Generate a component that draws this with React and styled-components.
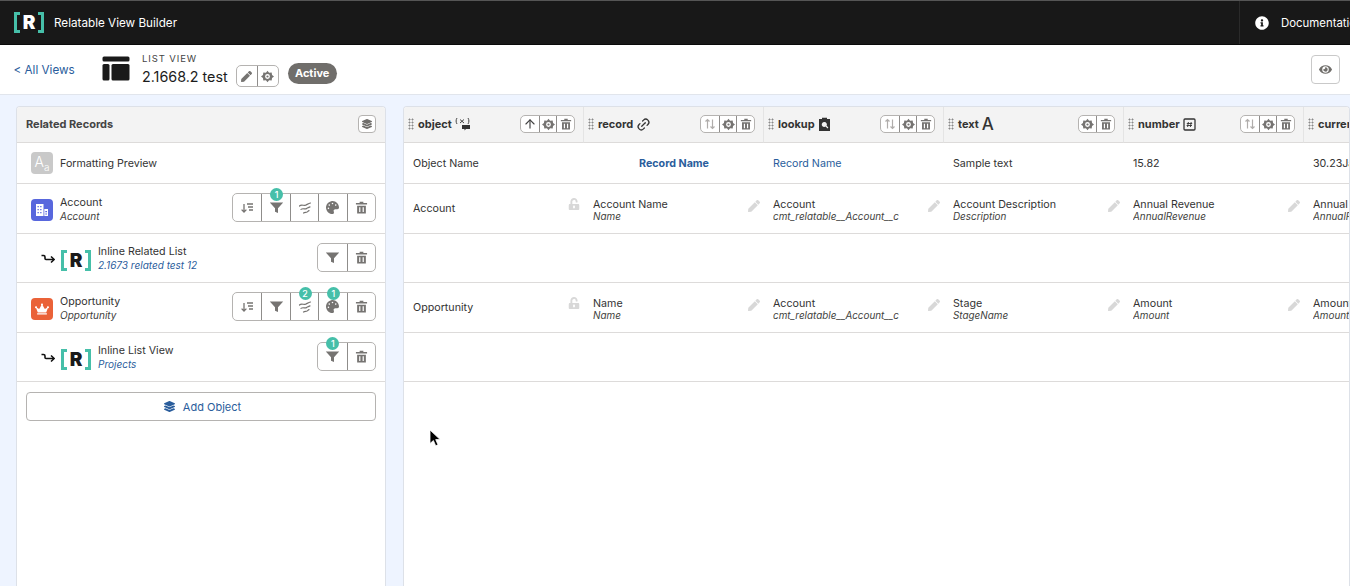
import React from "react";
import styled, { createGlobalStyle } from "styled-components";
import { FaPalette, FaCrown, FaLayerGroup, FaPen, FaInfoCircle, FaUnlockAlt, FaEye } from "react-icons/fa";
import { Link2, ArrowUp } from "lucide-react";

const GlobalStyle = createGlobalStyle`
  html, body { margin: 0; height: 100%; overflow: hidden; background: #eef4ff; }
  body { font-family: Inter, "Liberation Sans", sans-serif; color: #2b2b2b; }
`;

// --- top bar ---

const Page = styled.div`
  position: relative;
  width: 1350px;
  height: 586px;
  display: flex;
  flex-direction: column;
  overflow: hidden;
`;

const TopBar = styled.header`
  height: 45px;
  box-sizing: border-box;
  flex: none;
  display: flex;
  justify-content: space-between;
  background: #181818;
  border-top: 1px solid #555;
  border-bottom: 1px solid #0a0a0a;
  color: #fff;
`;

const Brand = styled.div`
  display: flex;
  align-items: center;
  gap: 10px;
  padding-left: 14px;
  font-size: 11.7px;
`;

const DocLink = styled.div`
  width: 111px;
  box-sizing: border-box;
  display: flex;
  align-items: center;
  gap: 12px;
  padding-left: 15px;
  border-left: 1px solid #2a2a2a;
  font-size: 11.4px;
  white-space: nowrap;
  overflow: hidden;
  flex: none;
  svg {
    flex: none;
  }
`;

const LogoBox = styled.span`
  display: inline-flex;
  align-items: center;
  justify-content: space-between;
  width: 30px;
  height: 21px;
  flex: none;
`;

const Bracket = styled.span`
  width: 6px;
  height: 100%;
  box-sizing: border-box;
  border: 3px solid #46bfa9;
  border-${(p) => (p.$right ? "left" : "right")}: none;
`;

const LogoLetter = styled.span`
  font-size: 19px;
  font-weight: 900;
  line-height: 1;
  color: ${(p) => p.$color};
`;

const Logo = ({ color }) => (
  <LogoBox>
    <Bracket />
    <LogoLetter $color={color}>R</LogoLetter>
    <Bracket $right />
  </LogoBox>
);

// --- view header ---

const SubHeader = styled.div`
  height: 50px;
  flex: none;
  box-sizing: border-box;
  display: flex;
  align-items: center;
  background: #fff;
  border-bottom: 1px solid #e1e5ec;
  padding: 0 10px 0 13.5px;
`;

const BackLink = styled.a`
  width: 88.5px;
  flex: none;
  margin-top: 1px;
  font-size: 11.7px;
  color: #2a5d9c;
`;

const ViewIconSlot = styled.span`
  display: flex;
  margin-top: -3px;
`;

const ViewMeta = styled.div`
  display: flex;
  flex-direction: column;
  margin-left: 12px;
  margin-top: 1px;
`;

const ViewType = styled.span`
  font-size: 9.5px;
  letter-spacing: 0.9px;
  color: #444;
`;

const ViewTitleRow = styled.div`
  display: flex;
  align-items: center;
  margin-top: 1px;
`;

const ViewTitle = styled.span`
  font-size: 14.3px;
  color: #1c1c1c;
  margin-right: 8px;
`;

const ActiveBadge = styled.span`
  margin: 7px 0 0 9px;
  height: 21px;
  width: 49px;
  display: flex;
  align-items: center;
  justify-content: center;
  border-radius: 11px;
  background: #706e6b;
  color: #fff;
  font-size: 11px;
  font-weight: 700;
`;

const EyeButton = styled.button`
  margin-left: auto;
  width: 29px;
  height: 29px;
  padding: 0;
  display: flex;
  align-items: center;
  justify-content: center;
  background: #fff;
  border: 1px solid #c9c9c9;
  border-radius: 4px;
  color: #706e6b;
`;

// --- button groups ---

const Group = styled.div`
  display: flex;
  flex: none;
  height: ${(p) => p.$h}px;
  box-sizing: border-box;
  border: 1px solid #b5b3b1;
  border-radius: 5px;
  background: #fff;
`;

const GroupButton = styled.span`
  position: relative;
  box-sizing: border-box;
  width: ${(p) => p.$w}px;
  display: flex;
  align-items: center;
  justify-content: center;
  color: ${(p) => (p.$muted ? "#b0adab" : "#767472")};
  & + & {
    border-left: 1px solid #8f8d8b;
  }
`;

const CountBadge = styled.span`
  position: absolute;
  top: -6px;
  left: 50%;
  margin-left: -6px;
  width: 13px;
  height: 13px;
  border-radius: 50%;
  background: #46bfa9;
  color: #fff;
  font-size: 9px;
  font-weight: 500;
  line-height: 13px;
  text-align: center;
`;

// --- left panel ---

const Body = styled.main`
  flex: 1;
  display: flex;
  gap: 17px;
  padding: 11px 0 0 16px;
  min-height: 0;
`;

const Panel = styled.section`
  width: ${(p) => p.$w}px;
  flex: none;
  box-sizing: border-box;
  background: #fff;
  border: 1px solid #dde1e8;
  border-bottom: none;
  border-radius: 4px 4px 0 0;
  overflow: hidden;
`;

const PanelHead = styled.div`
  height: 36px;
  box-sizing: border-box;
  display: flex;
  align-items: center;
  justify-content: space-between;
  padding: 0 9px 1px 9px;
  background: #f3f3f3;
  border-bottom: 1px solid #dddbda;
  font-size: 11px;
  font-weight: 700;
  color: #444;
`;

const SmallIconButton = styled.span`
  width: 18px;
  height: 18px;
  box-sizing: border-box;
  display: flex;
  align-items: center;
  justify-content: center;
  background: #fff;
  border: 1px solid #b5b3b1;
  border-radius: 4px;
  color: #706e6b;
`;

const ObjectRow = styled.div`
  height: ${(p) => p.$h}px;
  box-sizing: border-box;
  display: flex;
  align-items: center;
  padding: 0 9px 0 14px;
  gap: 7px;
  border-bottom: 1px solid #dddbda;
`;

const ChildArrow = styled.span`
  width: 14px;
  margin: 2px -1px 0 10px;
  flex: none;
  display: flex;
  color: #111;
`;

const ChildLogo = styled.span`
  display: flex;
  flex: none;
  margin-top: 5px;
`;

const ObjectIcon = styled.span`
  width: 22px;
  height: 22px;
  flex: none;
  display: flex;
  align-items: center;
  justify-content: center;
  margin-top: ${(p) => (p.$drop ? 3 : 0)}px;
  border-radius: 4px;
  background: ${(p) => p.$bg};
  color: #fff;
`;

const PreviewGlyph = styled.span`
  font-size: 14px;
  font-weight: 300;
  line-height: 1;
  margin-top: -3px;
  small {
    font-size: 10px;
    position: relative;
    top: 4px;
  }
`;

const ObjectText = styled.div`
  flex: 1;
  min-width: 0;
  padding-top: 1px;
  font-size: 10.7px;
  line-height: 14px;
`;

const ObjectName = styled.div`
  color: #333;
`;

const ObjectApi = styled.div`
  margin-top: -1px;
  font-size: 10px;
  font-style: italic;
  color: ${(p) => (p.$link ? "#2a5d9c" : "#3e3e3c")};
`;

const RowActions = styled.div`
  flex: none;
  margin-bottom: 2px;
`;

const AddObject = styled.button`
  display: flex;
  align-items: center;
  justify-content: center;
  gap: 8px;
  width: calc(100% - 18px);
  height: 29px;
  margin: 10px 9px;
  padding: 0 0 0 3px;
  background: #fff;
  border: 1px solid #b5b3b1;
  border-radius: 4px;
  font: inherit;
  font-size: 11px;
  color: #2a5d9c;
`;

// --- field table ---

const FieldGrid = styled.div`
  display: grid;
  grid-template-columns: repeat(6, 180px);
  grid-template-rows: 36px 41px 50px 49px 50px 49px;
`;

const ColumnHead = styled.div`
  display: flex;
  align-items: center;
  box-sizing: border-box;
  padding: 0 8px 1px 4px;
  background: #f3f3f3;
  border-bottom: 1px solid #dddbda;
  border-right: 1px solid #e4e4e4;
  font-size: 11px;
  font-weight: 700;
  color: #333;
`;

const Grip = styled.span`
  width: 6px;
  height: 12px;
  margin-right: 4px;
  flex: none;
  background-image: radial-gradient(#8a8a8a 0.9px, transparent 1.1px);
  background-size: 3px 3px;
`;

const ColumnType = styled.span`
  display: flex;
  align-items: center;
  margin-left: 3px;
  margin-right: auto;
  color: #333;
`;

const TextTypeGlyph = styled.span`
  font-size: 17px;
  font-weight: 500;
  line-height: 1;
`;

const LinkTypeIcon = styled(Link2)`
  transform: rotate(-45deg);
`;

const Cell = styled.div`
  display: flex;
  align-items: center;
  justify-content: ${(p) => (p.$center ? "center" : "flex-start")};
  box-sizing: border-box;
  padding: ${(p) => p.$top}px 9px 0;
  background: #fff;
  border-bottom: 1px solid #dddbda;
  font-size: 10.7px;
  font-weight: ${(p) => (p.$bold ? 700 : 400)};
  color: ${(p) => (p.$link ? "#2a5d9c" : "#333")};
  white-space: nowrap;
  overflow: hidden;
`;

const CellText = styled.div`
  flex: 1;
  line-height: 12px;
  overflow: hidden;
`;

const CellApi = styled.div`
  margin-top: -1px;
  font-size: 9.9px;
  font-style: italic;
  color: #3e3e3c;
`;

const CellIcon = styled.span`
  display: flex;
  flex: none;
  margin: -10px -5px 0 0;
  color: #d8d8d8;
`;

const Pointer = styled.svg`
  position: absolute;
  left: 429px;
  top: 429px;
`;

// --- icons ---

const FilterIcon = () => (
  <svg width="15" height="15" viewBox="0 0 15 15" fill="currentColor">
    <path d="M.8 2.500h13.400L9 8.300v4.700l-3-1.200V8.300z" />
  </svg>
);

const SortIcon = () => (
  <svg width="14" height="14" viewBox="0 0 14 14" fill="none" stroke="currentColor" strokeWidth="1.300">
    <path d="M4 3v8M1.600 8.600 4 11l2.400-2.400" />
    <path d="M7 3h6M8 6h5M9 9h4" />
  </svg>
);

const WavesIcon = () => (
  <svg width="14" height="14" viewBox="0 0 14 14" fill="none" stroke="currentColor" strokeWidth="1.200" strokeLinecap="round">
    <path d="M1.500 5c2-2 4 0 6-.8 1.500-.6 3-1.700 5-2.200" />
    <path d="M3 8.400c2-1.600 3.500.2 5.500-.8 1-.5 2-1.300 3.500-1.700" />
    <path d="M5.500 12c1.500-.8 2.500-.3 3.500-.9.600-.4 1-1 2-1.500" />
  </svg>
);

const GearIcon = () => (
  <svg width="13" height="13" viewBox="0 0 14 14" fill="currentColor">
    <path
      fillRule="evenodd"
      d="M7 .8 8.700 3l2.800-.4.400 2.800L14 7l-2.100 1.600-.4 2.800-2.800-.4L7 13.200 5.300 11l-2.800.4-.4-2.800L0 7l2.100-1.600.4-2.800L5.300 3zM7 4.400a2.600 2.600 0 1 0 0 5.200 2.600 2.600 0 0 0 0-5.200zM7 5.800a1.200 1.200 0 1 1 0 2.400 1.200 1.200 0 0 1 0-2.400z"
    />
  </svg>
);

const TrashIcon = ({ s = 12 }) => (
  <svg width={s} height={s} viewBox="0 0 14 14" fill="currentColor">
    <path d="M5 .8h4v1.400h4v1.600H1V2.200h4z" />
    <path fillRule="evenodd" d="M2.300 5h9.400v8.500H2.300zM4.500 6.600v5.300h1.300V6.600zM8.200 6.600v5.300h1.300V6.600z" />
  </svg>
);

const ReturnArrow = () => (
  <svg width="14" height="12" viewBox="0 0 14 12" fill="none" stroke="currentColor" strokeWidth="1.600">
    <path d="M.5 2.500h2c1 0 1.500.6 1.500 1.500v1.500c0 .8.500 1 1 1h8" />
    <path d="M10 3.500l3.200 3-3.200 3" />
  </svg>
);

const SortPairIcon = () => (
  <svg width="12" height="12" viewBox="0 0 12 12" fill="none" stroke="currentColor" strokeWidth="1.200">
    <path d="M3.500 10.500v-9M1.500 3.500l2-2 2 2" />
    <path d="M8.500 1.500v9M6.500 8.500l2 2 2-2" />
  </svg>
);

const ListViewIcon = () => (
  <svg width="28" height="25" viewBox="0 0 28 25" fill="#1a1a1a">
    <rect x="0.500" y="0.500" width="27" height="5" rx="1.500" />
    <rect x="0.500" y="8" width="7" height="16.500" rx="1.500" />
    <rect x="9.500" y="8" width="18" height="16.500" rx="1.500" />
  </svg>
);

const BuildingIcon = () => (
  <svg width="14" height="14" viewBox="0 0 14 14" fill="#fff">
    <path d="M1 1h7.500v12H1z" />
    <path d="M9.300 6H13v7H9.300z" />
    <path fill="#5867dd" d="M2.500 3h1.300v1.300H2.500zM5.200 3h1.300v1.300H5.200zM2.500 6h1.300v1.300H2.500zM5.200 6h1.300v1.300H5.200zM2.500 9h1.300v1.300H2.500zM5.200 9h1.300v1.300H5.200zM10.300 8h1.700v1.200h-1.700zM10.300 10.400h1.700v1.200h-1.700z" />
  </svg>
);

const ObjectTypeIcon = () => (
  <svg width="17" height="14" viewBox="0 0 17 14" fill="none" stroke="currentColor">
    <path strokeWidth="0.900" d="M2 1C.8 3 .8 5 2 7M13 1c1.200 2 1.200 4 0 6M5 2.500l4 3.500M9 2.500 5 6" />
    <path fill="currentColor" stroke="none" d="M7 8h8v4H11l-1.500 1.500V12H7z" />
  </svg>
);

const LookupIcon = () => (
  <svg width="13" height="14" viewBox="0 0 13 14" fill="currentColor">
    <path fillRule="evenodd" d="M1 2h3V.8h5V2h3v12H1zM6.300 5a2.500 2.500 0 1 0 1.300 4.600L9.500 11.400l.9-.9-1.800-1.800A2.500 2.500 0 0 0 6.300 5z" />
  </svg>
);

const NumberIcon = () => (
  <svg width="13" height="13" viewBox="0 0 13 13" fill="none" stroke="currentColor">
    <rect x="1" y="1" width="11" height="11" strokeWidth="1.300" rx="1" />
    <path strokeWidth="0.900" d="M5.400 4 4.600 9M8.200 4 7.400 9M3.800 5.500h5.400M3.600 7.500h5.400" />
  </svg>
);

const CursorIcon = () => (
  <Pointer width="13" height="18" viewBox="0 0 13 18">
    <path d="M1 1v13.500l3.400-3 2.300 5.300 2.300-1-2.300-5.200h4.500z" fill="#000" stroke="#fff" strokeWidth="0.800" />
  </Pointer>
);

// --- data ---

const rowTrash = { icon: <TrashIcon s={13} /> };
const rowFilter = { icon: <FilterIcon /> };
const palette = { icon: <FaPalette size={13} /> };

const objectRows = [
  {
    h: 50, icon: <BuildingIcon />, bg: "#5867dd", name: "Account", api: "Account",
    actions: [{ icon: <SortIcon /> }, { ...rowFilter, count: 1 }, { icon: <WavesIcon /> }, palette, rowTrash],
  },
  {
    h: 49, child: true, name: "Inline Related List", api: "2.1673 related test 12", link: true,
    actions: [rowFilter, rowTrash],
  },
  {
    h: 50, icon: <FaCrown size={14} />, bg: "#ea6238", name: "Opportunity", api: "Opportunity",
    actions: [{ icon: <SortIcon /> }, rowFilter, { icon: <WavesIcon />, count: 2 }, { ...palette, count: 1 }, rowTrash],
  },
  {
    h: 49, child: true, name: "Inline List View", api: "Projects", link: true,
    actions: [{ ...rowFilter, count: 1 }, rowTrash],
  },
];

const sortPair = { icon: <SortPairIcon />, muted: true };
const setup = { icon: <GearIcon /> };
const remove = { icon: <TrashIcon /> };

const columns = [
  { name: "object", type: <ObjectTypeIcon />, actions: [{ icon: <ArrowUp size={14} strokeWidth={2} color="#444" /> }, setup, remove] },
  { name: "record", type: <LinkTypeIcon size={15} strokeWidth={2} />, actions: [sortPair, setup, remove] },
  { name: "lookup", type: <LookupIcon />, actions: [sortPair, setup, remove] },
  { name: "text", type: <TextTypeGlyph>A</TextTypeGlyph>, actions: [setup, remove] },
  { name: "number", type: <NumberIcon />, actions: [sortPair, setup, remove] },
  { name: "currency", actions: [sortPair, setup, remove] },
];

const previewCells = [
  { text: "Object Name" },
  { text: "Record Name", link: true, bold: true, center: true },
  { text: "Record Name", link: true },
  { text: "Sample text" },
  { text: "15.82" },
  { text: "30.23Ja" },
];

const accountCells = [
  { text: "Account", lock: true },
  { text: "Account Name", api: "Name" },
  { text: "Account", api: "cmt_relatable__Account__c" },
  { text: "Account Description", api: "Description" },
  { text: "Annual Revenue", api: "AnnualRevenue" },
  { text: "Annual", api: "AnnualRevenue" },
];

const opportunityCells = [
  { text: "Opportunity", lock: true },
  { text: "Name", api: "Name" },
  { text: "Account", api: "cmt_relatable__Account__c" },
  { text: "Stage", api: "StageName" },
  { text: "Amount", api: "Amount" },
  { text: "Amount", api: "Amount" },
];

const emptyCells = columns.map(() => ({}));

const tableRows = [previewCells, accountCells, emptyCells, opportunityCells, emptyCells];

// --- components ---

const ButtonGroup = ({ actions, h, w }) => (
  <Group $h={h}>
    {actions.map((a, i) => (
      <GroupButton key={i} $w={w} $muted={a.muted}>
        {a.icon}
        {a.count && <CountBadge>{a.count}</CountBadge>}
      </GroupButton>
    ))}
  </Group>
);

const FieldCell = ({ cell, index }) => (
  <Cell $link={cell.link} $bold={cell.bold} $center={cell.center} $top={cell.api ? 4 : 1}>
    {cell.center ? (
      cell.text
    ) : (
      <CellText>
        {cell.text}
        {cell.api && <CellApi>{cell.api}</CellApi>}
      </CellText>
    )}
    {cell.lock && <CellIcon><FaUnlockAlt size={12} /></CellIcon>}
    {cell.api && index < 5 && <CellIcon><FaPen size={12} /></CellIcon>}
  </Cell>
);

const App = () => (
  <Page>
    <GlobalStyle />
    <TopBar>
      <Brand>
        <Logo color="#fff" />
        Relatable View Builder
      </Brand>
      <DocLink>
        <FaInfoCircle size={14} />
        Documentation
      </DocLink>
    </TopBar>

    <SubHeader>
      <BackLink>&lt; All Views</BackLink>
      <ViewIconSlot><ListViewIcon /></ViewIconSlot>
      <ViewMeta>
        <ViewType>LIST VIEW</ViewType>
        <ViewTitleRow>
          <ViewTitle>2.1668.2 test</ViewTitle>
          <ButtonGroup h={22} w={20.5} actions={[{ icon: <FaPen size={11} /> }, setup]} />
        </ViewTitleRow>
      </ViewMeta>
      <ActiveBadge>Active</ActiveBadge>
      <EyeButton><FaEye size={13} /></EyeButton>
    </SubHeader>

    <Body>
      <Panel $w={370}>
        <PanelHead>
          Related Records
          <SmallIconButton><FaLayerGroup size={10} /></SmallIconButton>
        </PanelHead>
        <ObjectRow $h={41}>
          <ObjectIcon $bg="#c9c9c9">
            <PreviewGlyph>A<small>a</small></PreviewGlyph>
          </ObjectIcon>
          <ObjectText><ObjectName>Formatting Preview</ObjectName></ObjectText>
        </ObjectRow>
        {objectRows.map((row) => (
          <ObjectRow key={row.name} $h={row.h}>
            {row.child ? (
              <>
                <ChildArrow><ReturnArrow /></ChildArrow>
                <ChildLogo><Logo color="#1a1a1a" /></ChildLogo>
              </>
            ) : (
              <ObjectIcon $bg={row.bg} $drop>{row.icon}</ObjectIcon>
            )}
            <ObjectText>
              <ObjectName>{row.name}</ObjectName>
              <ObjectApi $link={row.link}>{row.api}</ObjectApi>
            </ObjectText>
            <RowActions>
              <ButtonGroup h={29} w={28.4} actions={row.actions} />
            </RowActions>
          </ObjectRow>
        ))}
        <AddObject><FaLayerGroup size={11} />Add Object</AddObject>
      </Panel>

      <Panel $w={947}>
        <FieldGrid>
          {columns.map((col) => (
            <ColumnHead key={col.name}>
              <Grip />
              {col.name}
              <ColumnType>{col.type}</ColumnType>
              <ButtonGroup h={18} w={17.6} actions={col.actions} />
            </ColumnHead>
          ))}
          {tableRows.map((cells, r) =>
            cells.map((cell, c) => <FieldCell key={`${r}-${c}`} cell={cell} index={c} />)
          )}
        </FieldGrid>
      </Panel>
    </Body>

    <CursorIcon />
  </Page>
);

export default App;
